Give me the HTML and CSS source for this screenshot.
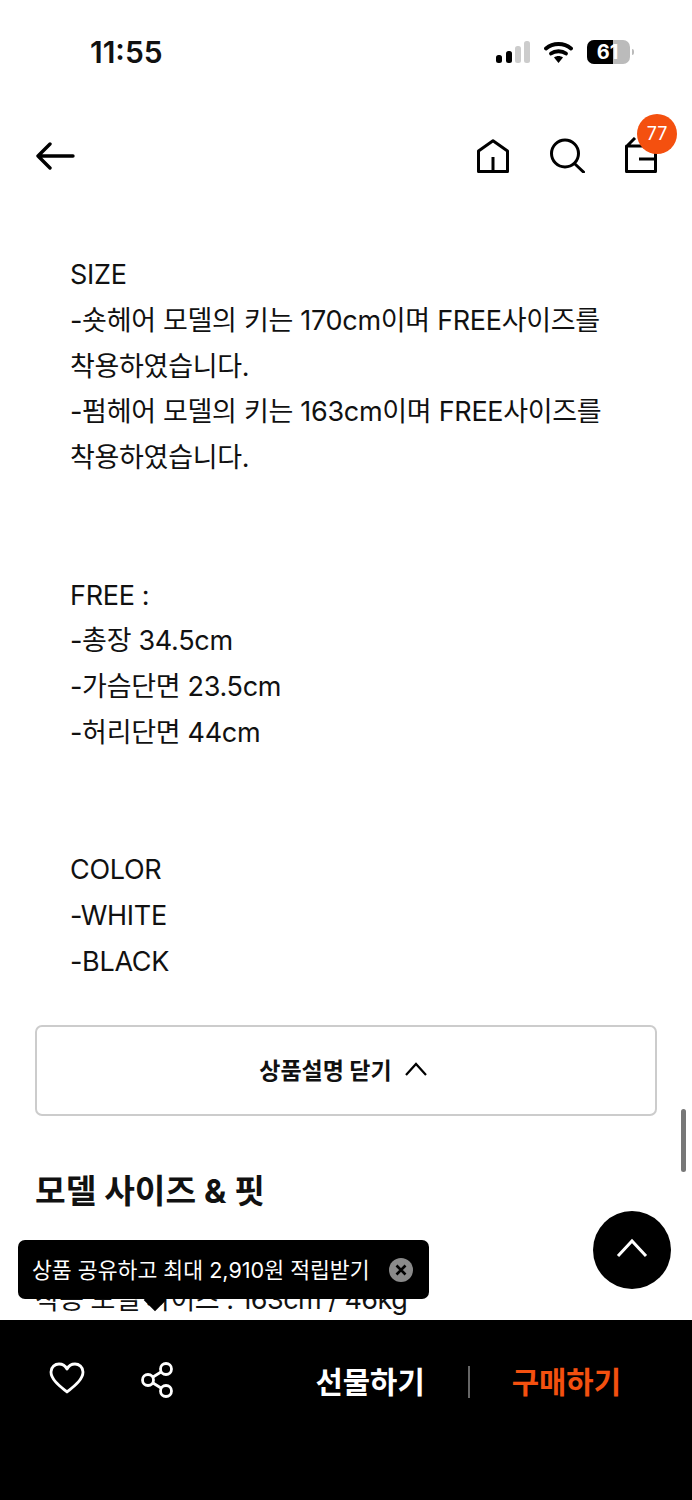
FILE: index.html
```html
<!DOCTYPE html>
<html lang="ko">
<head>
  <meta charset="UTF-8">
  <meta name="viewport" content="width=device-width, initial-scale=1.0">
  <title>상품설명</title>
  <link rel="stylesheet" href="styles.css">
</head>
<body>
  <div class="phone">
    <div class="status-bar">
      <span class="clock">11:55</span>
      <div class="status-icons">
        <svg class="signal" width="34" height="22" viewBox="0 0 34 22">
          <rect x="0" y="14" width="6" height="8" rx="2.5" fill="#000"/>
          <rect x="10" y="10" width="6" height="12" rx="2.5" fill="#000"/>
          <rect x="19" y="5" width="6" height="17" rx="2.5" fill="#ccc"/>
          <rect x="28" y="0" width="6" height="22" rx="2.5" fill="#ccc"/>
        </svg>
        <svg class="wifi" width="29" height="22" viewBox="0 0 29 22">
          <path d="M2 7.500C9 1.500 20 1.500 27 7.500" fill="none" stroke="#000" stroke-width="3.800" stroke-linecap="round"/>
          <path d="M7 12.500C11 9.500 18 9.500 22 12.500" fill="none" stroke="#000" stroke-width="3.800" stroke-linecap="round"/>
          <path d="M10 16.500L14.500 22L19 16.500C16.500 14.500 12.500 14.500 10 16.500Z" fill="#000"/>
        </svg>
        <div class="battery">
          <div class="battery-body"><span class="battery-fill"></span><span class="battery-num">61</span></div>
          <span class="battery-cap"></span>
        </div>
      </div>
    </div>

    <header class="top-nav">
      <svg class="back" width="40" height="28" viewBox="0 0 40 28">
        <path d="M38 14H3M15 2L3 14L15 26" fill="none" stroke="#000" stroke-width="3.400" stroke-linecap="round" stroke-linejoin="round"/>
      </svg>
      <div class="nav-icons">
        <svg width="32" height="34" viewBox="0 0 32 34">
          <path d="M1.500 32.500V12L16 1.800L30.500 12V32.500ZM16 32.500V18" fill="none" stroke="#000" stroke-width="3" stroke-linejoin="round"/>
        </svg>
        <svg width="35" height="35" viewBox="0 0 35 35">
          <circle cx="15" cy="15.500" r="13.500" fill="none" stroke="#000" stroke-width="3"/>
          <path d="M25 26L33.500 34" stroke="#000" stroke-width="3" stroke-linecap="round"/>
        </svg>
        <div class="cart">
          <svg width="32" height="36" viewBox="0 0 32 36">
            <path d="M1.500 9H30.500V34.500H1.500ZM2 9L10 1M14 22H31" fill="none" stroke="#000" stroke-width="3" stroke-linejoin="round"/>
          </svg>
          <span class="cart-badge">77</span>
        </div>
      </div>
    </header>

    <main>
      <div class="description">
        <p>SIZE<br>-숏헤어 모델의 키는 170cm이며 FREE사이즈를<br>착용하였습니다.<br>-펌헤어 모델의 키는 163cm이며 FREE사이즈를<br>착용하였습니다.</p>
        <p>FREE :<br>-총장 34.5cm<br>-가슴단면 23.5cm<br>-허리단면 44cm</p>
        <p>COLOR<br>-WHITE<br>-BLACK</p>
      </div>

      <button class="toggle-desc">
        상품설명 닫기
        <svg width="24" height="14" viewBox="0 0 24 14">
          <path d="M2 13L12 2L22 13" fill="none" stroke="#000" stroke-width="2.200"/>
        </svg>
      </button>

      <h2 class="section-title">모델 사이즈 &amp; 핏</h2>
      <p class="model-info">착용 모델 사이즈 : 163cm / 46kg</p>
    </main>

    <span class="scroll-thumb"></span>

    <button class="to-top">
      <svg width="32" height="20" viewBox="0 0 32 20">
        <path d="M2 18L16 3L30 18" fill="none" stroke="#fff" stroke-width="3"/>
      </svg>
    </button>

    <div class="share-tip">
      <span class="tip-text">상품 공유하고 최대 2,910원 적립받기</span>
      <svg width="24" height="24" viewBox="0 0 24 24">
        <circle cx="12" cy="12" r="12" fill="#8a8a8a"/>
        <path d="M7.500 7.500L16.500 16.500M16.500 7.500L7.500 16.500" stroke="#000" stroke-width="2.600"/>
      </svg>
      <i class="tip-arrow"></i>
    </div>

    <footer class="buy-bar">
      <div class="buy-icons">
        <svg width="36" height="32" viewBox="0 0 36 32">
          <path d="M18 30C12 25 2 18 2 10C2 5 6 2 10 2C13.500 2 16.500 4 18 7C19.500 4 22.500 2 26 2C30 2 34 5 34 10C34 18 24 25 18 30Z" fill="none" stroke="#fff" stroke-width="2.800" stroke-linejoin="round"/>
        </svg>
        <svg width="34" height="36" viewBox="0 0 34 36">
          <circle cx="7" cy="18" r="5.500" fill="none" stroke="#fff" stroke-width="2.800"/>
          <circle cx="25" cy="7" r="5.500" fill="none" stroke="#fff" stroke-width="2.800"/>
          <circle cx="25" cy="29" r="5.500" fill="none" stroke="#fff" stroke-width="2.800"/>
          <path d="M12 15L20 10M12 21L20 26" stroke="#fff" stroke-width="2.800"/>
        </svg>
      </div>
      <div class="buy-actions">
        <span class="gift">선물하기</span>
        <i class="buy-divider"></i>
        <span class="purchase">구매하기</span>
      </div>
    </footer>
  </div>
</body>
</html>
```

FILE: styles.css
```css
* {
  box-sizing: border-box;
}
body {
  margin: 0;
  font-family: Inter, 'Noto Sans CJK KR', sans-serif;
  background-color: #fff;
  color: #111;
}
button {
  font-family: inherit;
  cursor: pointer;
}
.phone {
  position: relative;
  width: 692px;
  height: 1500px;
  overflow: hidden;
  background-color: #fff;
}
.status-bar {
  display: flex;
  justify-content: space-between;
  align-items: center;
  height: 104px;
  padding: 0 58px 0 90px;
}
.clock {
  font-size: 30px;
  font-weight: 600;
  color: #111;
}
.status-icons {
  display: flex;
  align-items: center;
  gap: 14px;
}
.battery {
  display: flex;
  align-items: center;
  gap: 2px;
}
.battery-body {
  position: relative;
  width: 43px;
  height: 24px;
  border-radius: 7px;
  overflow: hidden;
  background-color: #bbb;
}
.battery-fill {
  position: absolute;
  left: 0;
  top: 0;
  width: 26px;
  height: 24px;
  background-color: #000;
}
.battery-num {
  position: absolute;
  left: 0;
  width: 41px;
  text-align: center;
  line-height: 24px;
  font-size: 20px;
  font-weight: 700;
  color: #fff;
}
.battery-cap {
  width: 2px;
  height: 6px;
  border-radius: 0 2px 2px 0;
  background-color: #bbb;
}
.top-nav {
  display: flex;
  justify-content: space-between;
  align-items: flex-end;
  height: 69px;
  padding: 0 34px 0 35px;
}
.back {
  margin-bottom: 3px;
}
.nav-icons {
  display: flex;
  align-items: flex-end;
  gap: 41px;
}
.cart {
  position: relative;
  display: flex;
  margin: 0 1px 0 -1px;
}
.cart-badge {
  position: absolute;
  left: 12px;
  top: -23px;
  width: 40px;
  height: 40px;
  border-radius: 50%;
  background-color: #f4500f;
  color: #fff;
  font-size: 18px;
  line-height: 40px;
  text-align: center;
}
main {
  padding: 0 35px;
}
.description {
  padding: 79px 35px 0;
  margin: 0 0 0 0;
  font-size: 27px;
  line-height: 45.800px;
  letter-spacing: -0.300px;
}
.description p {
  margin: 0 0 91.600px;
}
.description p:last-child {
  margin-bottom: 0;
}
.toggle-desc {
  display: flex;
  justify-content: center;
  align-items: center;
  gap: 12px;
  width: 622px;
  height: 91px;
  margin-top: 40px;
  padding: 0 5px 2px 0;
  border: 2px solid #ccc;
  border-radius: 7px;
  background-color: #fff;
  font-size: 23px;
  font-weight: 700;
  color: #111;
}
.section-title {
  margin: 51px 0 0;
  font-size: 33.300px;
  line-height: 48px;
  font-weight: 700;
  color: #111;
}
.model-info {
  margin: 62px 0 0;
  font-size: 27px;
  line-height: 46px;
  letter-spacing: -0.550px;
}
.scroll-thumb {
  position: absolute;
  left: 681px;
  top: 1109px;
  width: 5px;
  height: 63px;
  border-radius: 3px;
  background-color: #777;
}
.to-top {
  position: absolute;
  left: 593px;
  top: 1211px;
  display: flex;
  justify-content: center;
  align-items: center;
  width: 78px;
  height: 78px;
  padding: 0 0 4px;
  border: none;
  border-radius: 50%;
  background-color: #000;
}
.share-tip {
  position: absolute;
  left: 18px;
  top: 1240px;
  display: flex;
  justify-content: space-between;
  align-items: center;
  width: 411px;
  height: 59px;
  padding: 0 16px 0 14px;
  border-radius: 7px;
  background-color: #000;
  color: #fff;
  font-size: 21.600px;
}
.tip-text {
  margin-bottom: 3px;
}
.tip-arrow {
  position: absolute;
  left: 129px;
  top: 52px;
  width: 16px;
  height: 16px;
  background-color: #000;
  transform: rotate(45deg);
}
.buy-bar {
  position: absolute;
  left: 0;
  bottom: 0;
  display: flex;
  justify-content: space-between;
  width: 692px;
  height: 180px;
  padding: 42px 71px 0 49px;
  background-color: #000;
}
.buy-icons {
  display: flex;
  align-items: flex-start;
  gap: 56px;
}
.buy-actions {
  display: flex;
  align-items: flex-start;
  font-size: 29.700px;
  line-height: 40px;
  font-weight: 700;
}
.gift {
  color: #fff;
}
.purchase {
  color: #f4500f;
}
.buy-divider {
  width: 2px;
  height: 32px;
  margin: 4px 42px 0 43px;
  background-color: #666;
}
```
